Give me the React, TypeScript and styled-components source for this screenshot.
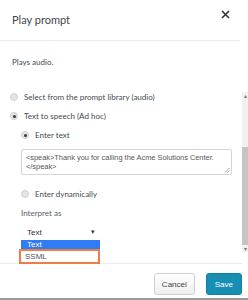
import React from "react";
import styled, { createGlobalStyle } from "styled-components";

const GlobalStyle = createGlobalStyle`
	html, body {
		margin: 0;
		padding: 0;
		background: #ffffff;
	}
	* {
		box-sizing: border-box;
	}
`;

const options = [
	{ label: "Select from the prompt library (audio)", checked: false, indent: false },
	{ label: "Text to speech (Ad hoc)", checked: true, indent: false },
];

export default function App() {
	return (
		<>
			<GlobalStyle />
			<Dialog>
				<Header>
					<Title>Play prompt</Title>
					<CloseButton aria-label="Close">
						<svg width="9" height="9" viewBox="0 0 9 9">
							<path d="M1 1L8 8M8 1L1 8" stroke="#333" strokeWidth="1.6" />
						</svg>
					</CloseButton>
				</Header>
				<Description>Plays audio.</Description>
				<ScrollArea>
					<Content>
						{options.map(o => (
							<RadioRow key={o.label}>
								<Radio $checked={o.checked} />
								<RadioLabel>{o.label}</RadioLabel>
							</RadioRow>
						))}
						<SubGroup>
							<RadioRow>
								<Radio $checked />
								<RadioLabel>Enter text</RadioLabel>
							</RadioRow>
							<TextArea>
								&lt;speak&gt;Thank you for calling the Acme Solutions Center.
								<br />
								&lt;/speak&gt;
								<Grip>
									<svg width="6" height="6" viewBox="0 0 6 6">
										<path d="M5.5 1L1 5.5M5.5 3.5L3.5 5.5" stroke="#999" strokeWidth="0.8" />
									</svg>
								</Grip>
							</TextArea>
							<RadioRow $gap={14}>
								<Radio />
								<RadioLabel>Enter dynamically</RadioLabel>
							</RadioRow>
							<FieldLabel>Interpret as</FieldLabel>
							<SelectWrap>
								<SelectValue>Text</SelectValue>
								<Caret>▾</Caret>
								<DropList>
									<DropItem $active>Text</DropItem>
									<DropItem $outlined>SSML</DropItem>
								</DropList>
							</SelectWrap>
						</SubGroup>
					</Content>
					<ScrollTrack>
						<Arrow>▴</Arrow>
						<Thumb />
						<Arrow>▾</Arrow>
					</ScrollTrack>
				</ScrollArea>
				<Footer>
					<Button>Cancel</Button>
					<Button $primary>Save</Button>
				</Footer>
			</Dialog>
		</>
	);
}

const Dialog = styled.div`
	width: 248px;
	height: 300px;
	display: flex;
	flex-direction: column;
	font-family: Lato, "Open Sans", sans-serif;
	color: #444b52;
	border-bottom: 2px solid #9a9a9a;
	overflow: hidden;
`;

const Header = styled.div`
	width: 240px;
	height: 41px;
	flex: none;
	display: flex;
	align-items: flex-start;
	justify-content: space-between;
	padding: 13px 10px 0 12px;
	border-bottom: 1px solid #eaeded;
`;

const Title = styled.div`
	font-size: 11px;
	line-height: 14px;
	color: #3f454c;
`;

const CloseButton = styled.div`
	display: flex;
	margin-top: -3px;
`;

const Description = styled.div`
	height: 51px;
	flex: none;
	padding: 16px 0 0 12px;
	font-size: 8px;
	line-height: 10px;
`;

const ScrollArea = styled.div`
	height: 161px;
	flex: none;
	display: flex;
`;

const Content = styled.div`
	flex: 1;
	padding-left: 10px;
	position: relative;
`;

const RadioRow = styled.div<{ $gap?: number }>`
	display: flex;
	align-items: center;
	gap: 6px;
	height: 10px;
	margin-bottom: 9px;
	margin-top: ${({ $gap }) => ($gap ? `${$gap}px` : "0")};
`;

const Radio = styled.span<{ $checked?: boolean }>`
	width: 8px;
	height: 8px;
	border-radius: 50%;
	background: #e4e4e4;
	border: 1px solid #d0d0d0;
	display: flex;
	align-items: center;
	justify-content: center;
	&::after {
		content: "";
		width: 3px;
		height: 3px;
		border-radius: 50%;
		background: ${({ $checked }) => ($checked ? "#3a3a3a" : "transparent")};
	}
`;

const RadioLabel = styled.span`
	font-size: 8px;
	line-height: 10px;
	color: #444b52;
`;

const SubGroup = styled.div`
	padding-left: 11px;
	width: 222px;
`;

const TextArea = styled.div`
	position: relative;
	height: 26px;
	border: 1px solid #d5d5d5;
	border-radius: 2px;
	padding: 3px 4px;
	font-family: "Liberation Sans", Arial, sans-serif;
	font-size: 7.4px;
	line-height: 9px;
	color: #555;
	white-space: nowrap;
`;

const Grip = styled.span`
	position: absolute;
	right: 1px;
	bottom: 1px;
	display: flex;
`;

const FieldLabel = styled.div`
	font-size: 8px;
	line-height: 10px;
	margin-bottom: 9px;
	color: #5a6068;
`;

const SelectWrap = styled.div`
	position: relative;
	width: 79px;
	height: 10px;
	display: flex;
	align-items: center;
	justify-content: space-between;
	padding: 0 5px 0 6px;
	font-family: "Liberation Sans", Arial, sans-serif;
	font-size: 8px;
	color: #333;
`;

const SelectValue = styled.span``;

const Caret = styled.span`
	font-size: 7px;
	color: #333;
`;

const DropList = styled.div`
	position: absolute;
	left: 0;
	top: 13px;
	width: 79px;
	background: #ffffff;
	z-index: 2;
	font-family: "Liberation Sans", Arial, sans-serif;
`;

const DropItem = styled.div<{ $active?: boolean; $outlined?: boolean }>`
	height: ${({ $outlined }) => ($outlined ? "15px" : "9px")};
	line-height: ${({ $outlined }) => ($outlined ? "11px" : "9px")};
	padding-left: ${({ $outlined }) => ($outlined ? "4px" : "6px")};
	font-size: 8px;
	background: ${({ $active }) => ($active ? "#2e7cf6" : "#ffffff")};
	color: ${({ $active }) => ($active ? "#ffffff" : "#555")};
	border: ${({ $outlined }) => ($outlined ? "2px solid #ef7b45" : "none")};
	margin-left: ${({ $outlined }) => ($outlined ? "-2px" : "0")};
`;

const ScrollTrack = styled.div`
	width: 6px;
	margin-right: 0;
	background: #f1f1f1;
	display: flex;
	flex-direction: column;
	align-items: center;
	height: 160px;
`;

const Arrow = styled.div`
	height: 7px;
	font-size: 6px;
	line-height: 7px;
	color: #777;
`;

const Thumb = styled.div`
	margin-top: 48px;
	width: 6px;
	flex: 1;
	background: #c4c4c4;
`;

const Footer = styled.div`
	width: 242px;
	margin-top: 10px;
	border-top: 1px solid #eaeded;
	display: flex;
	justify-content: flex-end;
	gap: 11px;
	padding-top: 9px;
`;

const Button = styled.div<{ $primary?: boolean }>`
	height: 22px;
	padding: 0 ${({ $primary }) => ($primary ? "8px" : "7px")};
	display: flex;
	align-items: center;
	border-radius: 3px;
	font-family: "Liberation Sans", Arial, sans-serif;
	font-size: 8px;
	color: ${({ $primary }) => ($primary ? "#ffffff" : "#444")};
	background: ${({ $primary }) =>
		$primary ? "#178fb3" : "linear-gradient(#ffffff, #efefef)"};
	border: 1px solid ${({ $primary }) => ($primary ? "#137fa0" : "#cfcfcf")};
`;
